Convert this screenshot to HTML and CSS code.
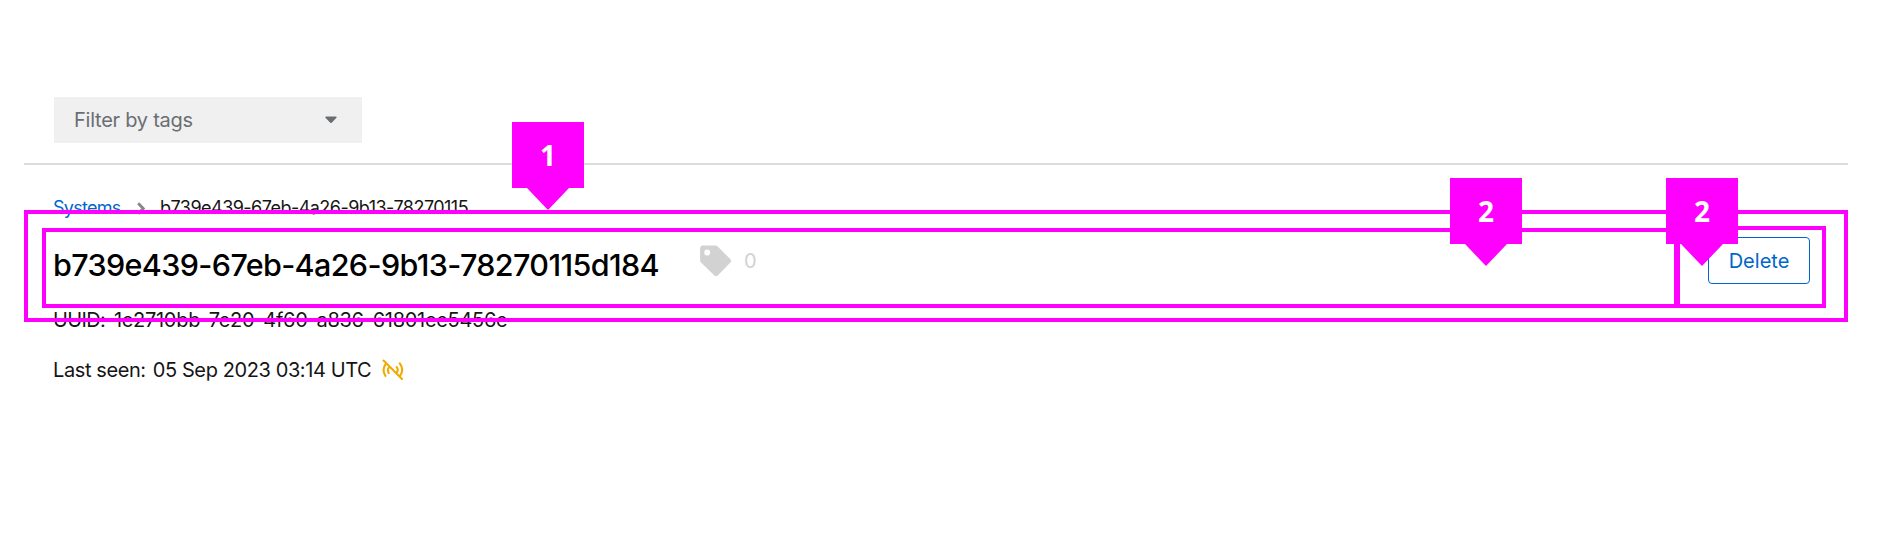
FILE: index.html
```html
<!DOCTYPE html>
<html lang="en">
<head>
<meta charset="utf-8">
<title>System details</title>
<link rel="stylesheet" href="styles.css">
</head>
<body>
<main class="page">
  <div class="toolbar">
    <button class="filter"><span>Filter by tags</span>
      <svg width="12" height="8" viewBox="0 0 12 8"><path d="M1 .5h10q1 .2.5 1.200L6.700 6.800q-.7.600-1.400 0L.4 1.700Q0 .7 1 .5z" fill="#6a6e73"/></svg>
    </button>
  </div>
  <nav class="breadcrumb">
    <a class="crumb-link">Systems</a>
    <svg class="chevron" width="8" height="13" viewBox="0 0 8 13"><path d="M1.200 1.200l5 5.300-5 5.300" fill="none" stroke="#858789" stroke-width="2.800"/></svg>
    <span class="crumb-id">b739e439-67eb-4a26-9b13-78270115</span>
  </nav>
  <header class="heading">
    <h1 class="title">b739e439-67eb-4a26-9b13-78270115d184</h1>
    <span class="tags">
      <svg width="32" height="32" viewBox="0 0 32 32"><path fill="#d2d2d2" fill-rule="evenodd" d="M3 .5h12.500q1.300 0 2.200.9l12.700 12.800q1.500 1.800 0 3.400L17.800 30.600q-1.700 1.400-3.400 0L1 17.500q-.9-1-.9-2.200V3.500Q.2.700 3 .5zM7.200 4.600a3 3 0 1 0 0 6 3 3 0 1 0 0-6z"/></svg>
      <span>0</span>
    </span>
    <button class="delete">Delete</button>
  </header>
  <div class="uuid"><span class="uuid-label">UUID:</span><span class="uuid-value">1c2710bb-7e20-4f60-a836-61801ce5456e</span></div>
  <div class="seen"><span>Last seen:</span><span>05 Sep 2023 03:14 UTC</span>
    <svg width="22" height="22" viewBox="0 0 22 22" fill="none" stroke="#f0ab00" stroke-width="2.100" stroke-linecap="round"><path d="M1.500 1.500l18.500 18.500M3.200 5.700Q-.2 11.500 3.500 16.800M6.500 9Q5.200 11.500 6.700 14M14.700 8.200Q16.800 11 14.800 13.400M17.800 4.300Q22.400 10.500 18.300 16.500"/></svg>
  </div>
</main>
<div class="outline outline-row"></div>
<div class="outline outline-main"></div>
<div class="outline outline-action"></div>
<div class="marker marker-row">1</div>
<div class="marker marker-main">2</div>
<div class="marker marker-action">2</div>
</body>
</html>
```
FILE: styles.css
```css
* { box-sizing: border-box; }
body { margin: 0; height: 534px; position: relative; overflow: hidden; background: #fff; color: #151515; font: 20px/30px Inter, "Open Sans", sans-serif; }
svg { display: block; flex: none; }
button { font: inherit; margin: 0; }
.page { padding: 97px 38px 0 24px; }
.toolbar { height: 68px; padding-left: 30px; border-bottom: 2px solid #dcdcdc; }
.filter { width: 308px; height: 46px; padding: 0 25px 0 20px; border: 0; background: #f0f0f0; color: #6a6e73; display: flex; align-items: center; justify-content: space-between; letter-spacing: -.25px; }
.breadcrumb { display: flex; align-items: center; height: 30px; margin-top: 28px; padding-left: 29px; font-size: 18px; white-space: nowrap; }
.crumb-link { width: 84px; color: #06c; letter-spacing: -.72px; }
.chevron { margin-right: 15px; }
.crumb-id { letter-spacing: -.53px; }
.heading { display: flex; height: 78px; padding: 14px 38px 0 29px; align-items: flex-start; }
.title { margin: 9px 0 0; width: 647px; font-size: 30.5px; line-height: 38px; font-weight: 500; letter-spacing: -.63px; color: #000; white-space: nowrap; }
.tags { display: flex; align-items: center; gap: 12px; margin-top: 8px; color: #d2d2d2; }
.delete { width: 102px; height: 47px; margin-left: auto; padding: 0; border: 1px solid #06c; border-radius: 4px; background: #fff; color: #06c; }
.uuid { display: flex; padding-left: 29px; margin-top: 4px; }
.uuid-label { width: 61px; letter-spacing: -.65px; }
.uuid-value { letter-spacing: -.27px; }
.seen { display: flex; align-items: center; gap: 7px; margin-top: 20px; padding-left: 29px; letter-spacing: -.4px; }
.seen svg { margin-left: 4px; }
.outline { position: absolute; border: 4px solid #f0f; }
.outline-row { left: 24px; top: 210px; width: 1824px; height: 112px; }
.outline-main { left: 42px; top: 228px; width: 1636px; height: 80px; }
.outline-action { left: 1676px; top: 226px; width: 150px; height: 82px; }
.marker { position: absolute; width: 72px; height: 66px; background: #f0f; color: #fff; font: bold 28px/67px "Open Sans", sans-serif; text-align: center; }
.marker::after { content: ""; position: absolute; left: 15px; top: 66px; border: solid transparent; border-width: 22px 21.5px 0; border-top-color: #f0f; }
.marker-row { left: 512px; top: 122px; }
.marker-main { left: 1450px; top: 178px; }
.marker-action { left: 1666px; top: 178px; }
```
